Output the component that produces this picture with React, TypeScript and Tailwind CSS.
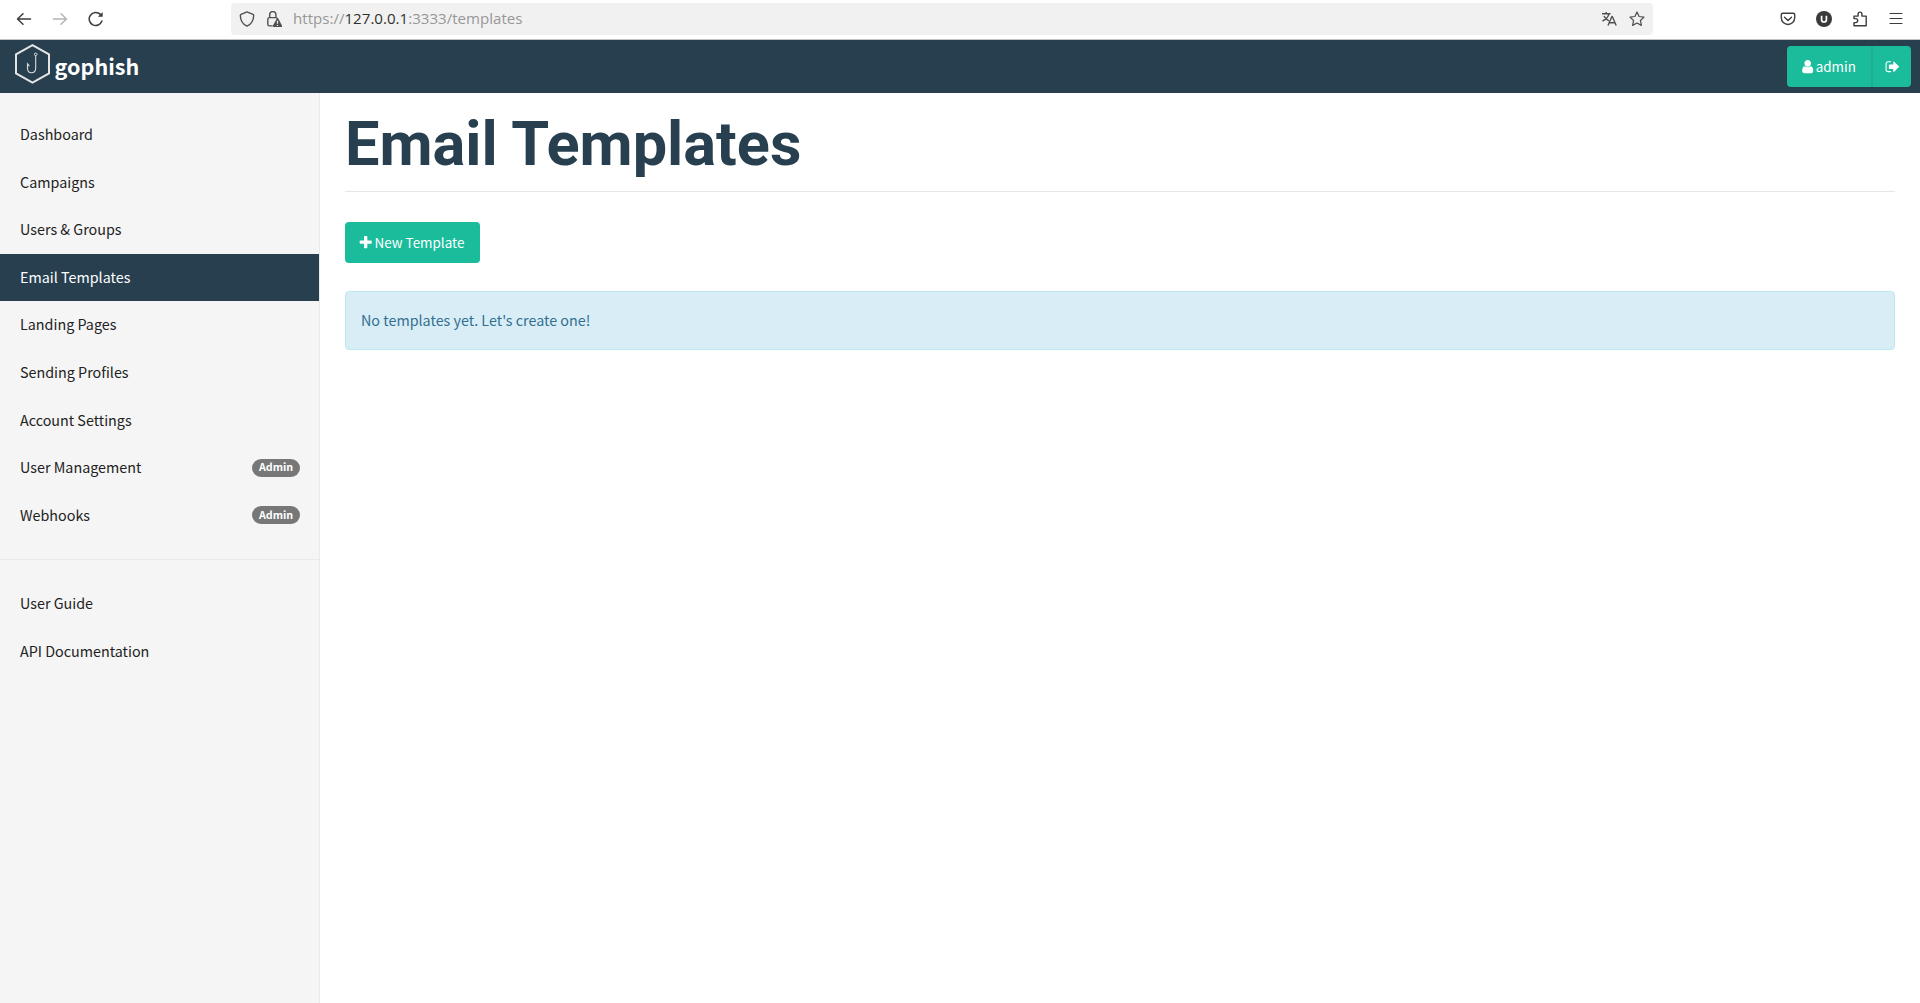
import React from 'react';

const SOURCE = "font-['Noto_Sans_CJK_SC',sans-serif]";

type Item = { label: string; active?: boolean; badge?: string };

const mainItems: Item[] = [
  { label: 'Dashboard' },
  { label: 'Campaigns' },
  { label: 'Users & Groups' },
  { label: 'Email Templates', active: true },
  { label: 'Landing Pages' },
  { label: 'Sending Profiles' },
  { label: 'Account Settings' },
  { label: 'User Management', badge: 'Admin' },
  { label: 'Webhooks', badge: 'Admin' },
];

const docItems: Item[] = [{ label: 'User Guide' }, { label: 'API Documentation' }];

function Glyph({ d, className }: { d: string; className: string }) {
  return (
    <svg viewBox="0 0 1792 1792" fill="currentColor" className={className}>
      <path d={d} />
    </svg>
  );
}

const PLUS =
  'M1600 736v192q0 40-28 68t-68 28h-416v416q0 40-28 68t-68 28h-192q-40 0-68-28t-28-68v-416h-416q-40 0-68-28t-28-68v-192q0-40 28-68t68-28h416v-416q0-40 28-68t68-28h192q40 0 68 28t28 68v416h416q40 0 68 28t28 68z';
const USER =
  'M1536 1399q0 109-62.5 187t-150.5 78h-854q-88 0-150.5-78t-62.5-187q0-85 8.5-160.5t31.5-152 58.5-131 94-89 134.5-34.5q131 128 313 128t313-128q76 0 134.5 34.5t94 89 58.5 131 31.5 152 8.5 160.5zm-256-887q0 159-112.5 271.5t-271.5 112.5-271.5-112.5-112.5-271.5 112.5-271.5 271.5-112.5 271.5 112.5 112.5 271.5z';
const SIGN_OUT =
  'M704 1440q0 4 1 20t.5 26.5-3 23.5-10 19.5-20.5 6.5h-320q-119 0-203.5-84.5t-84.5-203.5v-704q0-119 84.5-203.5t203.5-84.5h320q13 0 22.5 9.5t9.5 22.5q0 4 1 20t.5 26.5-3 23.5-10 19.5-20.5 6.5h-320q-66 0-113 47t-47 113v704q0 66 47 113t113 47h312l11.5 1 11.5 3 8 5.500 7 9 2 13.500zm928-544q0 26-19 45l-544 544q-19 19-45 19t-45-19-19-45v-288h-448q-26 0-45-19t-19-45v-384q0-26 19-45t45-19h448v-288q0-26 19-45t45-19 45 19l544 544q19 19 19 45z';

function Line({ children, className = '' }: { children: React.ReactNode; className?: string }) {
  return (
    <svg
      viewBox="0 0 16 16"
      fill="none"
      stroke="currentColor"
      strokeWidth="1.25"
      strokeLinecap="round"
      strokeLinejoin="round"
      className={`size-4 shrink-0 ${className}`}
    >
      {children}
    </svg>
  );
}

function BrowserBar() {
  return (
    <div className="flex h-[40px] items-start border-b border-[#c4c4c4] bg-white pt-[3px] pl-4 text-[#3d3d3d]">
      <div className="flex h-8 w-[215px] items-center gap-5">
        <Line><path d="M14.5 8H1.7M7 2.7 1.5 8 7 13.3" strokeWidth="1.5" /></Line>
        <Line className="text-[#b5b5b5]"><path d="M1.5 8h12.8M9 2.7 14.5 8 9 13.3" strokeWidth="1.5" /></Line>
        <Line>
          <path d="M13.9 10A6.5 6.5 0 1 1 12.3 3.4" strokeWidth="1.5" />
          <path d="M14.7 1v4.8H9.900z" fill="currentColor" stroke="none" />
        </Line>
      </div>
      <div className="flex h-8 w-[1422px] items-center rounded-[4px] bg-[#f1f1f1] pl-2 text-[#505050]">
        <Line><path d="M8 .9 14 3.3c.5.2.7.5.7 1C14.6 9.500 12 13.400 8 15.200 4 13.400 1.400 9.500 1.300 4.300c0-.5.2-.8.7-1z" strokeWidth="1.400" /></Line>
        <svg viewBox="0 0 16 16" fill="none" className="ml-[11px] size-4 shrink-0">
          <path d="M6 14.900H3.500c-1 0-1.700-.700-1.700-1.700V8.300c0-1 .700-1.700 1.700-1.700h6.200c.9 0 1.600.6 1.700 1.400M3.700 6.600V3.700a3.100 3.100 0 0 1 6.200 0v2.900" stroke="currentColor" strokeWidth="1.400" strokeLinecap="round" />
          <path d="M10.900 7.600 6.900 14.600c-.4.700 0 1.400.7 1.400h7.600c.7 0 1.100-.700.7-1.400l-3.600-7c-.300-.6-1.100-.6-1.400 0z" fill="currentColor" />
          <path d="M11.500 9.700v3M11.500 14v1" stroke="#f1f1f1" strokeWidth="1.200" />
        </svg>
        <div className="mb-[2px] ml-[11px] flex-1 font-['Open_Sans',sans-serif] text-[15.100px] leading-5 text-[#979797]">
          https://<span className="text-[#303030]">127.0.0.1</span>:3333/templates
        </div>
        <Line className="text-[#505050]">
          <path d="M1 2.700h8.500M5.200 1v1.500M7.900 2.900C7.300 6 4.800 8.600 1.500 10M2.900 5c1 2 2.800 3.800 5 4.800M7 14.500l3.900-9h.4l3.900 9M8.400 11.700h5.400" strokeLinecap="butt" strokeWidth="1.400" />
        </Line>
        <Line className="mr-2 ml-3 text-[#505050]">
          <path d="m8 1 2.100 4.500 4.900.6-3.600 3.400 1 4.900L8 12l-4.400 2.400 1-4.900L1 6.100l4.900-.6z" />
        </Line>
      </div>
      <div className="flex h-8 flex-1 items-center justify-end gap-5 pr-4">
        <Line><path d="M2.700 2.200h10.600c.8 0 1.400.5 1.400 1.300v3.300c0 3.800-3 6.700-6.700 6.700S1.300 10.600 1.300 6.800V3.500c0-.8.6-1.300 1.400-1.300zM4.500 6.300 8 9.500l3.500-3.200" strokeWidth="1.400" /></Line>
        <svg viewBox="0 0 16 16" className="size-4 shrink-0">
          <circle cx="8" cy="8" r="8" fill="#3a3a3a" />
          <path d="M5.600 4.700v4q0 2.300 2.400 2.300t2.400-2.300v-4" fill="none" stroke="#fff" strokeWidth="1.700" />
        </svg>
        <Line><path d="M2 14.700v-3.100h1.700a2 2 0 0 0 0-4H2V5.100h4.100V3a1.900 1.900 0 0 1 3.800 0v2.100h4.300v9.600z" strokeWidth="1.400" /></Line>
        <Line><path d="M2 2.500h12M2 7.500h12M2 12.500h12" strokeWidth="1.200" /></Line>
      </div>
    </div>
  );
}

function TopNav() {
  return (
    <header className="flex h-[53px] justify-between bg-[#283f50] pr-[9px] pl-[15px] text-white">
      <div className="flex">
        <svg viewBox="0 0 36 42" fill="none" className="mt-[3px] h-[42px] w-9">
          <path d="M17.500 2.200 34 11.400v19L17.500 39.700 1 30.400v-19z" stroke="#e4e4e4" strokeWidth="2" />
          <circle cx="20.700" cy="11.300" r="1.300" stroke="#dcdcdc" strokeWidth="1" />
          <path d="M20.700 12.700v12.400c0 3-1.900 4.700-4.200 4.700-2.400 0-4-1.700-4-4.500v-4.500l1.900 2.400" stroke="#dcdcdc" strokeWidth="1.100" />
        </svg>
        <span className="mt-[10px] ml-[3.600px] text-[21.550px] leading-8 font-bold">gophish</span>
      </div>
      <div className="mt-[6px] flex h-[41px] overflow-hidden rounded-[4px] bg-[#1abc9c] text-[13.400px]">
        <div className="flex w-[84px] items-center pl-[13px]">
          <Glyph d={USER} className="size-[15.400px]" />
          <span className="mb-[2px] ml-[0.4px] leading-5">admin</span>
        </div>
        <div className="flex w-10 items-center border-l-2 border-[#1fae93] pl-[11.700px]">
          <Glyph d={SIGN_OUT} className="size-[15.400px]" />
        </div>
      </div>
    </header>
  );
}

function NavItem({ label, active, badge }: Item) {
  return (
    <li
      className={`mb-[0.6px] flex h-[47px] items-center justify-between pr-[19px] pb-[0.4px] pl-5 ${
        active ? 'bg-[#283f50] text-white' : 'text-[#222]'
      }`}
    >
      <span>{label}</span>
      {badge && (
        <span className="mt-[0.8px] flex h-[18px] w-12 items-center justify-center rounded-full bg-[#777] text-[10.700px] leading-none font-bold text-white">
          {badge}
        </span>
      )}
    </li>
  );
}

export default function App() {
  return (
    <div className={`flex h-[1003px] w-[1920px] flex-col overflow-hidden bg-white ${SOURCE}`}>
      <BrowserBar />
      <TopNav />
      <div className="flex flex-1">
        <nav className="w-[320px] border-r border-[#eaeaea] bg-[#f5f5f5] pt-[17.800px] text-[14.330px] leading-5">
          <ul>{mainItems.map((i) => <NavItem key={i.label} {...i} />)}</ul>
          <hr className="mt-[20px] mb-[20.600px] border-[#eaeaea]" />
          <ul>{docItems.map((i) => <NavItem key={i.label} {...i} />)}</ul>
        </nav>
        <main className="flex-1 pr-[25px] pl-[25px]">
          <h1 className="h-[99px] border-b border-[#e5e8e8] pt-[16px] font-['Roboto',sans-serif] text-[61.250px] leading-[70px] font-bold text-[#283f50]">
            Email Templates
          </h1>
          <button className="mt-[30px] flex h-[41px] w-[135px] items-center rounded-[4px] bg-[#1abc9c] pl-[13.200px] text-[13.450px] leading-5 text-white">
            <Glyph d={PLUS} className="size-[15.400px]" />
            <span className="mb-[2px] ml-[1px] whitespace-nowrap">New Template</span>
          </button>
          <div className="mt-7 flex h-[59px] items-center rounded-[4px] border border-[#bce8f1] bg-[#d9edf7] pb-[2px] pl-[15px] text-[14.330px] leading-5 text-[#31708f]">
            No templates yet. Let's create one!
          </div>
        </main>
      </div>
    </div>
  );
}
